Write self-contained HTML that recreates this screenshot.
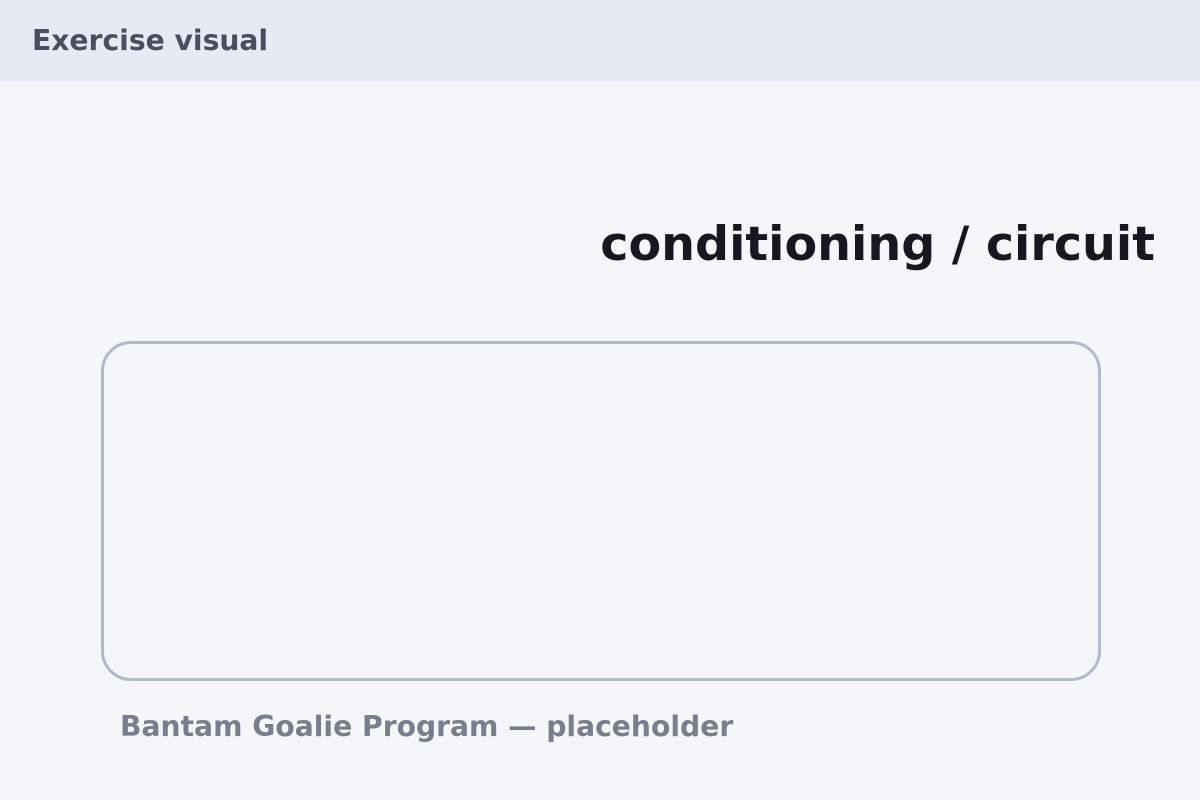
<!DOCTYPE html>
<html><head><meta charset="utf-8"><style>
html,body{margin:0;padding:0;width:1200px;height:800px;overflow:hidden;background:#f5f6fa;font-family:"DejaVu Sans","Liberation Sans",sans-serif;font-weight:bold;}
.hdr{position:absolute;left:0;top:0;width:1200px;height:81px;background:#e6eaf5;}
.hdr span{position:absolute;left:32px;top:25px;font-size:28.2px;color:#4a4e5e;line-height:32px;white-space:nowrap;}
.title{position:absolute;right:45px;top:215px;font-size:47.6px;color:#16171f;line-height:60px;white-space:nowrap;}
.box{position:absolute;left:101px;top:341px;width:994px;height:334px;border:3px solid #b3b9c8;border-radius:30px;}
.foot{position:absolute;left:120px;top:711px;font-size:28.2px;color:#7a7d8c;line-height:32px;white-space:nowrap;}
</style></head><body>
<div class="hdr"><span>Exercise visual</span></div>
<div class="title">conditioning / circuit</div>
<div class="box"></div>
<div class="foot">Bantam Goalie Program — placeholder</div>
</body></html>
